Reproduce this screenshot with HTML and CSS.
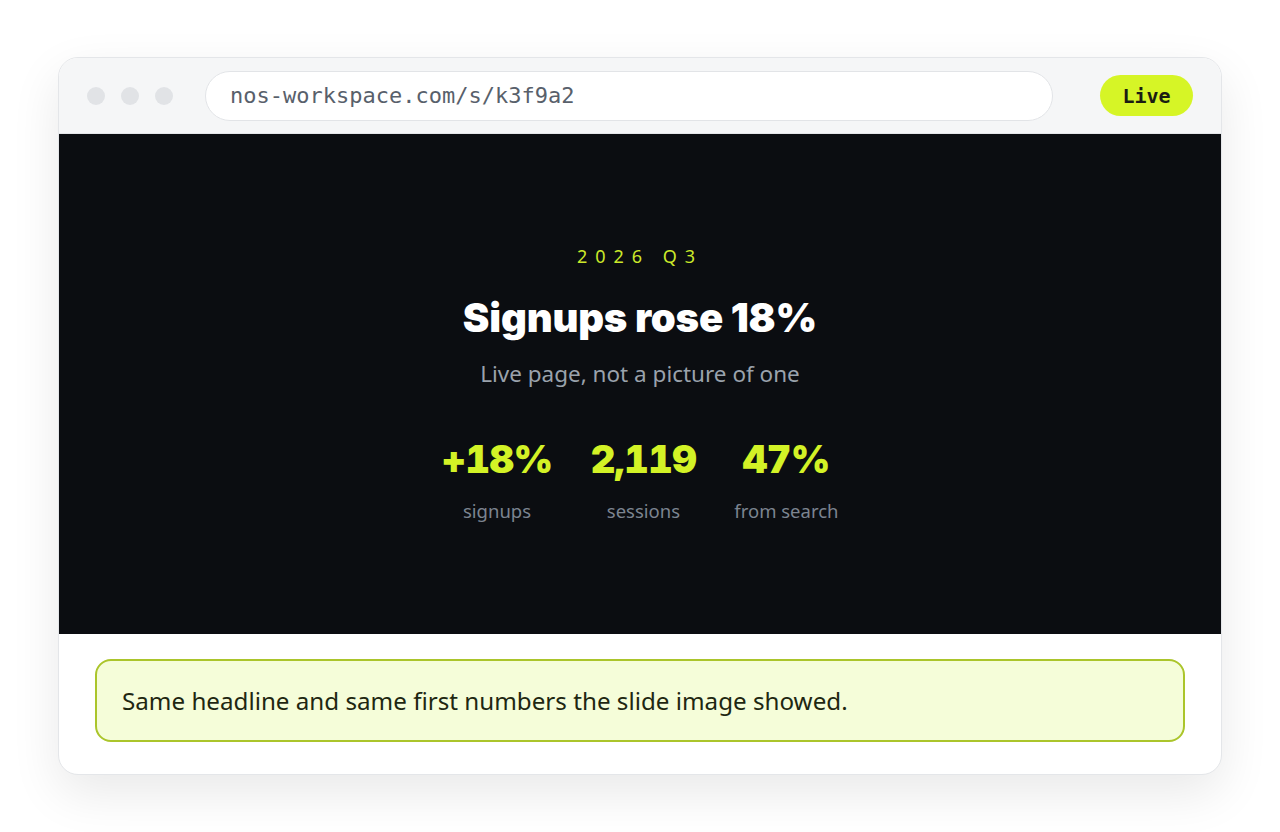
FILE: index.html
```html
<!DOCTYPE html>
<html>
<head>
<meta charset="utf-8">
<link rel="stylesheet" href="styles.css">
</head>
<body>
<div class="page">
  <div class="window">
    <div class="topbar">
      <div class="dots"><span class="dot"></span><span class="dot"></span><span class="dot"></span></div>
      <div class="url">nos-workspace.com/s/k3f9a2</div>
      <div class="live">Live</div>
    </div>
    <div class="slide">
      <div class="eyebrow">2026 Q3</div>
      <h1 class="headline">Signups rose 18%</h1>
      <p class="sub">Live page, not a picture of one</p>
      <div class="stats">
        <div class="stat"><div class="num">+18%</div><div class="label">signups</div></div>
        <div class="stat"><div class="num">2,119</div><div class="label">sessions</div></div>
        <div class="stat"><div class="num">47%</div><div class="label">from search</div></div>
      </div>
    </div>
    <div class="footer">
      <div class="note">Same headline and same first numbers the slide image showed.</div>
    </div>
  </div>
</div>
</body>
</html>
```

FILE: styles.css
```css
* { box-sizing: border-box; }
html, body { margin: 0; padding: 0; background: #ffffff; }
body { font-family: "Noto Sans", "Open Sans", sans-serif; }
.page { padding: 57px 58px 58px 58px; min-height: 832px; }
.window {
  width: 1164px;
  border: 1px solid #e4e6e9;
  border-radius: 20px;
  overflow: hidden;
  background: #ffffff;
  box-shadow: 0 18px 50px rgba(0,0,0,0.09);
}
.topbar {
  height: 76px;
  background: #f5f6f7;
  border-bottom: 1px solid #e4e6e9;
  display: flex;
  align-items: center;
  padding: 0 28px 0 28px;
}
.dots { display: flex; gap: 16px; }
.dot { width: 18px; height: 18px; border-radius: 50%; background: #e1e3e6; display: block; }
.url {
  margin-left: 32px;
  width: 848px;
  height: 50px;
  border: 1px solid #e2e4e7;
  border-radius: 25px;
  background: #ffffff;
  display: flex;
  align-items: center;
  padding-left: 24px;
  font-family: "DejaVu Sans Mono", "Liberation Mono", monospace;
  font-size: 22px;
  color: #58606b;
}
.live {
  margin-left: auto;
  width: 93px;
  height: 41px;
  border-radius: 21px;
  background: #d6f526;
  display: flex;
  align-items: center;
  justify-content: center;
  font-family: "DejaVu Sans Mono", "Liberation Mono", monospace;
  font-weight: bold;
  font-size: 20px;
  color: #1b1d12;
}
.slide {
  height: 500px;
  background: #0b0d11;
  display: flex;
  flex-direction: column;
  align-items: center;
  padding-top: 110px;
}
.eyebrow {
  font-size: 18px;
  letter-spacing: 8px;
  color: #cbe92a;
  line-height: 24px;
}
.headline {
  margin: 23px 0 0 0;
  font-family: Inter, "Noto Sans", sans-serif;
  font-size: 40px;
  font-weight: 900;
  color: #ffffff;
  line-height: 54px;
  letter-spacing: -0.2px;
}
.sub {
  margin: 14px 0 0 0;
  font-size: 22.5px;
  color: #9aa2ac;
  line-height: 30px;
}
.stats {
  margin-top: 43px;
  display: flex;
  gap: 38px;
}
.stat { display: flex; flex-direction: column; align-items: center; }
.num {
  font-family: Inter, "Noto Sans", sans-serif;
  font-size: 38px;
  font-weight: 900;
  font-variant-numeric: tabular-nums;
  color: #d3f226;
  line-height: 54px;
  letter-spacing: -0.5px;
}
.label {
  margin-top: 13px;
  font-size: 18.5px;
  color: #7c8490;
  line-height: 24px;
}
.footer { padding: 25px 36px 32px 36px; }
.note {
  height: 83px;
  border: 2px solid #abc52b;
  border-radius: 16px;
  background: #f5fdd9;
  display: flex;
  align-items: center;
  padding-left: 25px;
  font-size: 24.2px;
  color: #1e2711;
}
```
